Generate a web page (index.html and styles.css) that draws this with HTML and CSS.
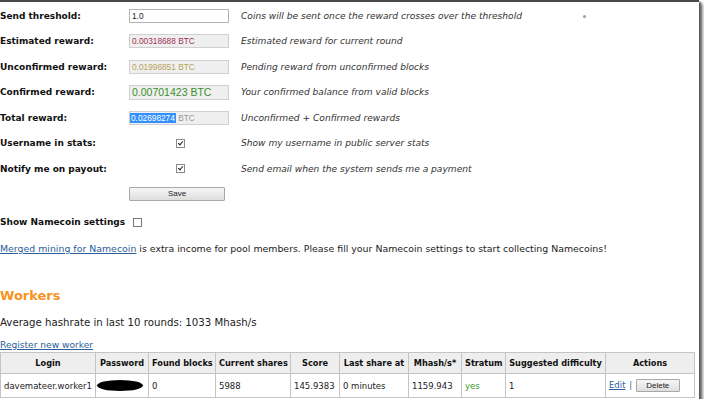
FILE: index.html
```html
<!DOCTYPE html>
<html>
<head>
<meta charset="utf-8">
<link rel="stylesheet" href="styles.css">
</head>
<body>
<div class="frame">
  <span class="dot"></span>
  <div class="form">
    <div class="lbl">Send threshold:</div>
    <div class="fld"><span class="box edit">1.0</span></div>
    <div class="desc">Coins will be sent once the reward crosses over the threshold</div>

    <div class="lbl">Estimated reward:</div>
    <div class="fld"><span class="box ro est">0.00318688 BTC</span></div>
    <div class="desc">Estimated reward for current round</div>

    <div class="lbl">Unconfirmed reward:</div>
    <div class="fld"><span class="box ro unc">0.01996851 BTC</span></div>
    <div class="desc">Pending reward from unconfirmed blocks</div>

    <div class="lbl">Confirmed reward:</div>
    <div class="fld"><span class="box ro conf">0.00701423 BTC</span></div>
    <div class="desc">Your confirmed balance from valid blocks</div>

    <div class="lbl">Total reward:</div>
    <div class="fld"><span class="box ro tot"><span class="sel">0.02698274</span> BTC</span></div>
    <div class="desc">Unconfirmed + Confirmed rewards</div>

    <div class="lbl">Username in stats:</div>
    <div class="fld chk"><span class="cb on"></span></div>
    <div class="desc">Show my username in public server stats</div>

    <div class="lbl">Notify me on payout:</div>
    <div class="fld chk"><span class="cb on"></span></div>
    <div class="desc">Send email when the system sends me a payment</div>

    <div class="lbl"></div>
    <div class="fld"><span class="btn save">Save</span></div>
    <div class="desc"></div>
  </div>

  <div class="namecoin"><span class="lbl">Show Namecoin settings</span><span class="cb"></span></div>

  <p class="merged"><a href="#">Merged mining for Namecoin</a> is extra income for pool members. Please fill your Namecoin settings to start collecting Namecoins!</p>

  <h2 class="workers">Workers</h2>
  <p class="avg">Average hashrate in last 10 rounds: 1033 Mhash/s</p>
  <p class="reg"><a href="#">Register new worker</a></p>

  <table class="wt">
    <thead>
      <tr>
        <th class="c1">Login</th><th class="c2">Password</th><th class="c3">Found blocks</th><th class="c4">Current shares</th><th class="c5">Score</th><th class="c6">Last share at</th><th class="c7">Mhash/s*</th><th class="c8">Stratum</th><th class="c9">Suggested difficulty</th><th class="c10">Actions</th>
      </tr>
    </thead>
    <tbody>
      <tr>
        <td>davemateer.worker1</td><td><span class="blob"></span></td><td>0</td><td>5988</td><td>145.9383</td><td>0 minutes</td><td>1159.943</td><td class="yes">yes</td><td>1</td><td class="act"><a href="#">Edit</a> <span class="pipe">|</span> <span class="btn del">Delete</span></td>
      </tr>
    </tbody>
  </table>
</div>
</body>
</html>
```

FILE: styles.css
```css
html, body {
  margin: 0;
  padding: 0;
  background: #fff;
}
.frame {
  position: relative;
  width: 699px;
  height: 397px;
  border-top: 2px solid #4a4a4a;
  box-shadow: 2px 2px 2px #555, 4px 4px 3px #999;
  background: #fff;
  overflow: hidden;
  font-family: "DejaVu Sans", Verdana, sans-serif;
  font-size: 8px;
  color: #222;
}
.dot {
  position: absolute;
  left: 583px;
  top: 13px;
  width: 3px;
  height: 3px;
  border-radius: 50%;
  background: #999;
}
.form {
  display: grid;
  grid-template-columns: 129px 112px 1fr;
  grid-auto-rows: 25.5px;
  padding-top: 1px;
}
.form > div {
  display: flex;
  align-items: center;
}
.lbl {
  font-weight: bold;
  font-size: 9px;
  color: #111;
}
.desc {
  font-style: italic;
  font-size: 9.1px;
  color: #333;
}
.box {
  display: block;
  box-sizing: border-box;
  width: 100px;
  height: 14px;
  line-height: 12px;
  padding: 0 2px;
  font-family: "Liberation Sans", Arial, sans-serif;
  font-size: 8.3px;
}
.edit {
  border: 1px solid #b5b5b5;
  background: #fff;
  color: #222;
}
.ro {
  border: 1px solid #d0d0d0;
  background: #efefef;
}
.est { color: #a33052; }
.unc { color: #b9a45c; }
.conf {
  color: #3b8f2e;
  font-size: 10.5px;
  height: 15px;
  line-height: 13px;
}
.tot { color: #999; padding-left: 0; }
.sel {
  background: #3390ff;
  color: #fff;
  padding: 0 1px;
}
.chk { padding-left: 47px; }
.cb {
  display: inline-block;
  box-sizing: border-box;
  width: 9px;
  height: 9px;
  border: 1px solid #8a8a8a;
  background: #fff;
  position: relative;
}
.cb.on::after {
  content: "";
  position: absolute;
  left: 2px;
  top: 0px;
  width: 2px;
  height: 4px;
  border: solid #222;
  border-width: 0 1.5px 1.5px 0;
  transform: rotate(40deg);
}
.btn {
  display: inline-block;
  box-sizing: border-box;
  border: 1px solid #a8a8a8;
  background: linear-gradient(#f7f7f7, #dedede);
  font-family: "Liberation Sans", Arial, sans-serif;
  font-size: 8px;
  text-align: center;
  color: #222;
  border-radius: 1px;
}
.save {
  width: 96px;
  height: 14px;
  line-height: 12px;
}
.namecoin {
  display: flex;
  align-items: center;
  gap: 8px;
  margin-top: 8px;
  height: 14px;
}
.namecoin .cb { border-color: #777; }
p { margin: 0; }
a { color: #2a5d9a; text-decoration: underline; }
.merged {
  margin-top: 14px;
  font-size: 9.4px;
}
.workers {
  margin: 34px 0 0;
  font-size: 13px;
  color: #f7931e;
  font-weight: bold;
  line-height: 16px;
}
.avg {
  margin-top: 13px;
  font-size: 10.2px;
}
.reg {
  margin-top: 12px;
  font-size: 9.1px;
}
.wt {
  margin-top: 2px;
  border-collapse: collapse;
  font-size: 8.5px;
  width: 694px;
  table-layout: fixed;
}
.wt th, .wt td {
  box-sizing: border-box;
  border: 1px solid #c4c4c4;
  padding: 0 3px;
  text-align: left;
  white-space: nowrap;
  overflow: hidden;
}
.wt th {
  background: #eeeeee;
  font-weight: bold;
  font-size: 8.2px;
  height: 21px;
  text-align: center;
  color: #111;
}
.wt td { height: 24px; }
.c1 { width: 95px; }
.c2 { width: 53px; }
.c3 { width: 67px; }
.c4 { width: 75px; }
.c5 { width: 49px; }
.c6 { width: 69px; }
.c7 { width: 53px; }
.c8 { width: 44px; }
.c9 { width: 100px; }
.c10 { width: 89px; }
.blob {
  display: inline-block;
  width: 46px;
  height: 11px;
  background: #000;
  border-radius: 50%;
  vertical-align: middle;
  margin-left: -2px;
}
.yes { color: #3c9a2a; }
.act a { color: #2a5d9a; }
.pipe { color: #2a5d9a; margin: 0 1px; }
.del {
  width: 44px;
  height: 13px;
  line-height: 11px;
  vertical-align: middle;
  margin-left: 0;
}
```
